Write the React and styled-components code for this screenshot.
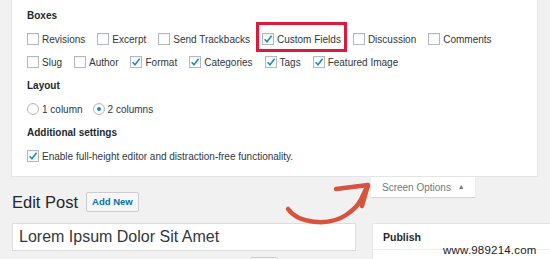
import styled, { createGlobalStyle } from "styled-components";

const GlobalStyle = createGlobalStyle`
	html, body {
		margin: 0;
		padding: 0;
		background: #f1f1f1;
		overflow: hidden;
	}
	body {
		font-family: "Liberation Sans", Arial, sans-serif;
		color: #32373c;
	}
`;

const boxes = [
	[
		{ label: "Revisions", checked: false },
		{ label: "Excerpt", checked: false },
		{ label: "Send Trackbacks", checked: false },
		{ label: "Custom Fields", checked: true, highlight: true },
		{ label: "Discussion", checked: false },
		{ label: "Comments", checked: false },
	],
	[
		{ label: "Slug", checked: false },
		{ label: "Author", checked: false },
		{ label: "Format", checked: true },
		{ label: "Categories", checked: true },
		{ label: "Tags", checked: true },
		{ label: "Featured Image", checked: true },
	],
];

function Check({ checked }) {
	return (
		<CheckBox>
			{checked && (
				<svg width="10" height="10" viewBox="0 0 10 10">
					<path
						d="M1.6 5.2 L4 7.8 L8.6 1.8"
						fill="none"
						stroke="#1e8cbe"
						strokeWidth="1.6"
					/>
				</svg>
			)}
		</CheckBox>
	);
}

function App() {
	return (
		<Page>
			<GlobalStyle />
			<Panel>
				<Section>
					<Label>Boxes</Label>
					{boxes.map((row, i) => (
						<Row key={i}>
							{row.map((b) => (
								<Item key={b.label} highlight={b.highlight}>
									<Check checked={b.checked} />
									<span>{b.label}</span>
								</Item>
							))}
						</Row>
					))}
				</Section>
				<Section>
					<Label>Layout</Label>
					<Row gap={10}>
						<Item>
							<Radio />
							<span>1 column</span>
						</Item>
						<Item>
							<Radio checked />
							<span>2 columns</span>
						</Item>
					</Row>
				</Section>
				<Section>
					<Label>Additional settings</Label>
					<Row>
						<Item>
							<Check checked />
							<span>
								Enable full-height editor and distraction-free functionality.
							</span>
						</Item>
					</Row>
				</Section>
			</Panel>
			<Columns>
				<MainColumn>
					<Heading>
						<h1>Edit Post</h1>
						<AddButton>Add New</AddButton>
					</Heading>
					<TitleInput>Lorem Ipsum Dolor Sit Amet</TitleInput>
					<PermalinkRow>
						<SmallButton />
					</PermalinkRow>
				</MainColumn>
				<SideColumn>
					<ScreenTab>
						Screen Options <span>▲</span>
					</ScreenTab>
					<PublishBox>
						<h2>Publish</h2>
					</PublishBox>
				</SideColumn>
			</Columns>
			<Arrow width="100" height="50" viewBox="0 0 100 50">
				<path
					d="M6 30 C16 44, 46 48, 64 36 S 80 14, 86 7"
					fill="none"
					stroke="#d6533e"
					strokeWidth="4.5"
					strokeLinecap="round"
				/>
				<path
					d="M54 10 L86 6 L80 27"
					fill="none"
					stroke="#d6533e"
					strokeWidth="4.5"
					strokeLinecap="round"
					strokeLinejoin="round"
				/>
			</Arrow>
			<Watermark>www.989214.com</Watermark>
		</Page>
	);
}
export default App;

const Page = styled.div`
	position: relative;
	width: 550px;
	height: 259px;
	overflow: hidden;
`;
const Panel = styled.div`
	margin: 0 12px 0 11px;
	padding: 9px 15px 10px;
	background: #ffffff;
	border: 1px solid #e5e5e5;
	border-top: none;
	box-sizing: border-box;
	height: 177px;
	display: flex;
	flex-direction: column;
	gap: 7px;
`;
const Section = styled.div`
	display: flex;
	flex-direction: column;
	gap: 3px;
`;
const Label = styled.div`
	font-size: 10px;
	font-weight: bold;
	line-height: 14px;
	color: #23282d;
	margin-bottom: 3px;
`;
const Row = styled.div`
	display: flex;
	align-items: center;
	height: 20px;
	gap: ${(props) => props.gap || 12}px;
`;
const Item = styled.div`
	position: relative;
	display: flex;
	align-items: center;
	gap: 3px;
	height: 20px;
	font-size: 10px;
	color: #32373c;
	white-space: nowrap;
	${(props) =>
		props.highlight &&
		`
		&::after {
			content: "";
			position: absolute;
			top: -7px;
			bottom: -3px;
			left: -6px;
			right: -6px;
			border: 3px solid #dc1a3c;
		}
	`}
`;
const CheckBox = styled.div`
	width: 12px;
	height: 12px;
	box-sizing: border-box;
	border: 1px solid #b4b9be;
	background: #fff;
	box-shadow: inset 0 1px 2px rgba(0, 0, 0, 0.07);
	display: flex;
	align-items: center;
	justify-content: center;
`;
const Radio = styled.div`
	width: 12px;
	height: 12px;
	box-sizing: border-box;
	border: 1px solid #b4b9be;
	border-radius: 50%;
	background: #fff;
	box-shadow: inset 0 1px 2px rgba(0, 0, 0, 0.07);
	display: flex;
	align-items: center;
	justify-content: center;
	&::before {
		content: "";
		width: 4px;
		height: 4px;
		border-radius: 50%;
		background: ${(props) => (props.checked ? "#1e8cbe" : "transparent")};
	}
`;
const Columns = styled.div`
	display: grid;
	grid-template-columns: 344px 200px;
	column-gap: 16px;
	padding-left: 12px;
`;
const MainColumn = styled.div`
	display: flex;
	flex-direction: column;
`;
const Heading = styled.div`
	display: flex;
	align-items: center;
	gap: 8px;
	margin-top: 15px;
	height: 20px;
	h1 {
		margin: 0;
		font-size: 16.5px;
		font-weight: normal;
		color: #23282d;
		line-height: 20px;
	}
`;
const AddButton = styled.div`
	height: 20px;
	box-sizing: border-box;
	padding: 0 5px;
	border: 1px solid #ccc;
	border-radius: 2px;
	background: #f7f7f7;
	color: #0073aa;
	font-size: 9.5px;
	font-weight: bold;
	line-height: 18px;
`;
const TitleInput = styled.div`
	margin-top: 11px;
	height: 28px;
	box-sizing: border-box;
	padding: 0 6px;
	border: 1px solid #ddd;
	background: #fff;
	font-size: 16px;
	line-height: 26px;
	color: #32373c;
`;
const PermalinkRow = styled.div`
	display: flex;
	margin-top: 6px;
	padding-left: 238px;
`;
const SmallButton = styled.div`
	width: 26px;
	height: 18px;
	border: 1px solid #ccc;
	border-radius: 2px;
	background: #f7f7f7;
`;
const SideColumn = styled.div`
	display: flex;
	flex-direction: column;
	align-items: flex-start;
`;
const ScreenTab = styled.div`
	margin-left: -1px;
	width: 104px;
	height: 20px;
	box-sizing: border-box;
	padding-left: 11px;
	background: #fff;
	box-shadow: 0 1px 1px rgba(0, 0, 0, 0.1);
	font-size: 10px;
	line-height: 20px;
	color: #72777c;
	white-space: nowrap;
	span {
		font-size: 7px;
		margin-left: 4px;
		vertical-align: 2px;
	}
`;
const PublishBox = styled.div`
	margin-top: 26px;
	width: 200px;
	height: 60px;
	background: #fff;
	border: 1px solid #e5e5e5;
	h2 {
		margin: 0;
		height: 26px;
		box-sizing: border-box;
		padding-left: 10px;
		border-bottom: 1px solid #eee;
		font-size: 10.5px;
		font-weight: bold;
		line-height: 26px;
		color: #23282d;
	}
`;
const Arrow = styled.svg`
	position: absolute;
	left: 282px;
	top: 179px;
`;
const Watermark = styled.div`
	position: absolute;
	left: 443px;
	top: 243px;
	font-size: 11.5px;
	line-height: 14px;
	color: #222;
	letter-spacing: 0.2px;
`;
